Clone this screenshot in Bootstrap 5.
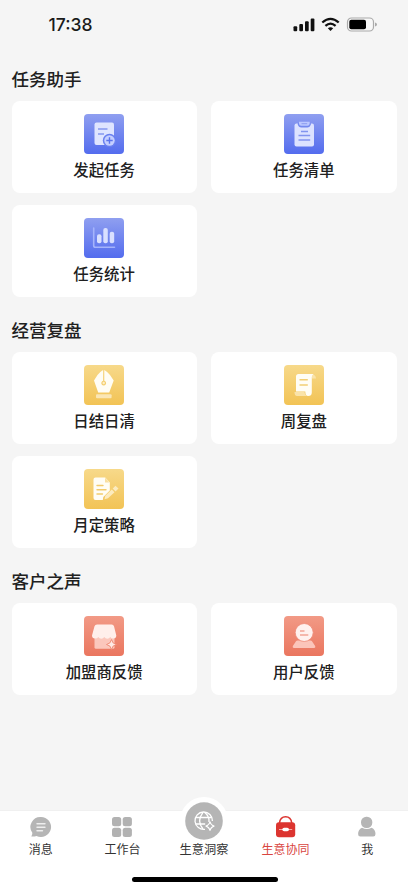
<!DOCTYPE html>
<html lang="zh-CN">
<head>
<meta charset="utf-8">
<meta name="viewport" content="width=device-width, initial-scale=1">
<title>生意协同</title>
<link href="https://cdn.jsdelivr.net/npm/bootstrap@5.3.0/dist/css/bootstrap.min.css" rel="stylesheet">
<style>
body { background: #f5f5f5; color: #202020; font-family: "Noto Sans CJK SC", sans-serif; }
.phone { width: 408px; height: 890px; overflow: hidden; }
.status { height: 50px; padding: 0 31px 0 48.5px; }
.clock { font: 500 17.5px/20px Inter, sans-serif; color: #1a1a1a; }
.content { padding: 16px 11.5px 0; }
.group-title { font-size: 17.5px; font-weight: 500; line-height: 25px; margin: 0 0 10px; }
.group + .group { margin-top: 20px; }
.tiles { display: grid; grid-template-columns: 1fr 1fr; gap: 12px 14.5px; }
.tile { height: 92px; border-radius: 8px; padding-top: 12.5px; }
.tile svg { width: 40px; height: 40px; display: block; }
.tile-name { font-size: 15.4px; font-weight: 500; line-height: 22px; margin-top: 4.5px; }
.tabs { height: 80px; border-top: 1px solid #f0f0f0; color: #333; }
.tab { padding-top: 4px; font-size: 12px; line-height: 18px; }
.tab svg { width: 24px; height: 24px; display: block; margin-bottom: 1px; }
.tab.active { color: #d9453f; }
.tab-main { margin-top: -15px; padding-top: 0; font-size: 12.2px; }
.tab-main svg { width: 50px; height: 50px; margin: 0 0 -6px; }
.home-bar { width: 146px; height: 5px; bottom: 8px; left: 131.5px; background: #000; }
</style>
<script src="https://cdn.jsdelivr.net/npm/bootstrap@5.3.0/dist/js/bootstrap.bundle.min.js"></script>
</head>
<body>
<svg width="0" height="0" class="position-absolute">
  <defs>
    <linearGradient id="blue" x2="0" y2="1"><stop stop-color="#8f9ff0"/><stop offset="1" stop-color="#536cee"/></linearGradient>
    <linearGradient id="gold" x2="0" y2="1"><stop stop-color="#f7d98a"/><stop offset="1" stop-color="#f2c355"/></linearGradient>
    <linearGradient id="coral" x2="0" y2="1"><stop stop-color="#f29a86"/><stop offset="1" stop-color="#ea765f"/></linearGradient>
  </defs>
</svg>
<div class="phone position-relative d-flex flex-column">
  <header class="status d-flex align-items-center justify-content-between">
    <span class="clock">17:38</span>
    <svg width="84" height="18" viewBox="0 0 84 18">
      <g fill="#111"><rect x="0.500" y="10.300" width="3.700" height="5" rx="1"/><rect x="6.300" y="8" width="3.700" height="7.300" rx="1"/><rect x="12" y="5.300" width="3.700" height="10" rx="1"/><rect x="17.700" y="2.500" width="3.700" height="12.800" rx="1"/></g>
      <g fill="none" stroke="#111" stroke-width="2.300"><path d="M29.300 6.500Q37.500-.8 45.700 6.500M32.400 9.800Q37.500 5.400 42.600 9.800"/></g>
      <path d="M34.800 12.200Q37.500 10.200 40.200 12.200L37.500 15Z" fill="#111"/>
      <rect x="54.500" y="2" width="26" height="13" rx="4" fill="#f8f8f8" stroke="#aaa" stroke-width="1.200"/>
      <rect x="56.300" y="3.700" width="16.700" height="9.600" rx="2" fill="#000"/>
      <path d="M82 6.500q2 .5 2 2t-2 2z" fill="#aaa"/>
    </svg>
  </header>

  <main class="content flex-grow-1">
    <section class="group">
      <h2 class="group-title">任务助手</h2>
      <div class="tiles">
        <div class="tile bg-white d-flex flex-column align-items-center">
          <svg viewBox="0 0 40 40"><rect width="40" height="40" rx="4" fill="url(#blue)"/>
            <rect x="10.500" y="8.500" width="19.500" height="22.500" rx="2" fill="#dfe5ff"/>
            <path d="M14 15h9.500M14 20h6" stroke="#8798ef" stroke-width="1.300"/>
            <circle cx="25.500" cy="26.500" r="6.700" fill="#6a80f0"/><circle cx="25.500" cy="26.500" r="5.200" fill="#c5cfff"/>
            <path d="M25.500 23.300v6.400M22.300 26.500h6.400" stroke="#5b73ec" stroke-width="1.400"/></svg>
          <div class="tile-name">发起任务</div>
        </div>
        <div class="tile bg-white d-flex flex-column align-items-center">
          <svg viewBox="0 0 40 40"><rect width="40" height="40" rx="4" fill="url(#blue)"/>
            <rect x="10.500" y="9.500" width="19.500" height="23" rx="2" fill="#dce2ff"/>
            <path d="M13.800 9h13v1.500q-.8 3-3.500 3h-6q-2.700 0-3.500-3z" fill="#7388ef"/>
            <path d="M15 7.800h10.700v1.700q0 2.300-2.200 2.300h-6.300q-2.200 0-2.200-2.300z" fill="#bbc7ff"/><path d="M17.500 9.700h5.700" stroke="#8b9bf0"/>
            <path d="M17 17.500h7M14.500 21.500h11.700M14.500 26h11.700" stroke="#8294ef" stroke-width="1.300"/></svg>
          <div class="tile-name">任务清单</div>
        </div>
        <div class="tile bg-white d-flex flex-column align-items-center">
          <svg viewBox="0 0 40 40"><rect width="40" height="40" rx="4" fill="url(#blue)"/>
            <path d="M9.700 10v17.500q0 1.800 1.800 1.800H30.500" stroke="#a5b4fb" stroke-width="1.600" stroke-linecap="round" fill="none"/>
            <g fill="#d9e0ff"><rect x="13" y="16.300" width="4.500" height="9" rx="2"/><rect x="19.300" y="10" width="4.500" height="15.300" rx="2"/><rect x="25.700" y="13.800" width="4.500" height="11.500" rx="2"/></g></svg>
          <div class="tile-name">任务统计</div>
        </div>
      </div>
    </section>

    <section class="group">
      <h2 class="group-title">经营复盘</h2>
      <div class="tiles">
        <div class="tile bg-white d-flex flex-column align-items-center">
          <svg viewBox="0 0 40 40"><rect width="40" height="40" rx="4" fill="url(#gold)"/>
            <path d="M19.100 5v10.700a2.400 2.400 0 1 0 1.200 0V5q3.500 2 5.700 5l3.700 5.500-4.500 12H14.200L10 15.500l3.500-5.500q2.200-3 5.600-5z" fill="#fffdf5"/>
            <circle cx="19.700" cy="18" r="1.200" fill="#fff0c8"/>
            <rect x="12" y="29.200" width="15.600" height="4" rx="1" fill="#fae6b5"/></svg>
          <div class="tile-name">日结日清</div>
        </div>
        <div class="tile bg-white d-flex flex-column align-items-center">
          <svg viewBox="0 0 40 40"><rect width="40" height="40" rx="4" fill="url(#gold)"/>
            <path d="M27 9q4.500 0 5 4.500h-4z" fill="#fae3a9"/>
            <path d="M14.500 9H29.500q-1.700.8-1.700 3v15.500q0 3.500-3.700 3.500-2.800 0-2.800-4.500H12V11.500Q12 9 14.500 9z" fill="#fffdf5"/>
            <path d="M15.500 14.700h8.300M15.500 20h8.300" stroke="#f2ce74" stroke-width="1.500"/>
            <path d="M10.500 27h10q.3 2.800 2 4H13q-2.500 0-2.500-4z" fill="#fae3a9"/></svg>
          <div class="tile-name">周复盘</div>
        </div>
        <div class="tile bg-white d-flex flex-column align-items-center">
          <svg viewBox="0 0 40 40"><rect width="40" height="40" rx="4" fill="url(#gold)"/>
            <path d="M11.500 8.500h9.700l4.600 5v8l-6.500 6.500-.5 3H11.500q-2 0-2-2V10.500q0-2 2-2z" fill="#fffdf5"/>
            <path d="M21 8.800v4.700h4.500" fill="#f9dfa0"/>
            <path d="M13 16.500h6M13 20.700h9M13 25h5.500" stroke="#f2cb6c" stroke-width="1.400" stroke-linecap="round"/>
            <path d="M31.500 16.800l3 2.800-3 2.800-2.800-2.800zM27.800 20.500l2.700 2.800-6.500 6-3.500 1 .8-3.500z" fill="#fcebbf"/></svg>
          <div class="tile-name">月定策略</div>
        </div>
      </div>
    </section>

    <section class="group">
      <h2 class="group-title">客户之声</h2>
      <div class="tiles">
        <div class="tile bg-white d-flex flex-column align-items-center">
          <svg viewBox="0 0 40 40"><rect width="40" height="40" rx="4" fill="url(#coral)"/>
            <path d="M10.500 21h20v10.300q0 1.500-1.500 1.500H12q-1.500 0-1.500-1.500z" fill="#fbc7bc"/>
            <path d="M13 8.500h14.700q1.700 0 2.300 1.800l2.300 9.200q0 3-3 3-2.200 0-3-1.500-1 1.800-3 1.800t-3-1.800q-1 1.800-3 1.800t-3-1.800q-.8 1.500-3.300 1.500-3 0-3-3l2.500-9.200q.6-1.800 2.500-1.800z" fill="#ffefeb"/>
            <path d="M27.500 23.500q.7 4.300 5 5-4.300.7-5 5-.7-4.300-5-5 4.300-.7 5-5z" fill="#ffe9e4" stroke="#ee8a75" stroke-width=".9"/></svg>
          <div class="tile-name">加盟商反馈</div>
        </div>
        <div class="tile bg-white d-flex flex-column align-items-center">
          <svg viewBox="0 0 40 40"><rect width="40" height="40" rx="4" fill="url(#coral)"/>
            <path d="M13.500 24.500h13q1 0 1.500.8l3 4.500q1 2-1 2.200H10q-2-.2-1-2.200l3-4.500q.5-.8 1.500-.8z" fill="#fbc5ba"/>
            <circle cx="20.200" cy="16.500" r="9" fill="#fff1ee" stroke="#ee8c78" stroke-width=".8"/>
            <path d="M16 15h4.500M16 19h8.300" stroke="#f2a597" stroke-width="1.300"/></svg>
          <div class="tile-name">用户反馈</div>
        </div>
      </div>
    </section>
  </main>

  <nav class="tabs bg-white row row-cols-5 g-0 text-center">
    <div class="tab col d-flex flex-column align-items-center">
      <svg viewBox="0 0 24 24"><path d="M12 2a10 10 0 1 1-4.500 18.900Q5 21.800 2.300 21.500q1.200-1.700 1-3.700A10 10 0 0 1 12 2z" fill="#b5b5b5"/><path d="M8 8.700h8M8 12.200h8M8 15.700h5.500" stroke="#eee" stroke-width="1.400" stroke-linecap="round"/></svg>消息
    </div>
    <div class="tab col d-flex flex-column align-items-center">
      <svg viewBox="0 0 24 24"><g fill="#b2b2b2"><rect x="2" y="2" width="9.200" height="9.200" rx="2.500"/><rect x="12.700" y="2" width="9.200" height="9.200" rx="2.500"/><rect x="2" y="12.700" width="9.200" height="9.200" rx="2.500"/><rect x="12.700" y="12.700" width="9.200" height="9.200" rx="2.500"/></g></svg>工作台
    </div>
    <div class="tab tab-main col d-flex flex-column align-items-center">
      <svg viewBox="0 0 50 50"><circle cx="25" cy="25" r="24" fill="#fff"/><circle cx="25" cy="25" r="18.800" fill="#b5b5b5"/>
        <g fill="none" stroke="#fff" stroke-width="1.300"><path d="M26 33.300A8.700 8.700 0 1 1 33.400 25"/><path d="M24 33Q17.300 25 24 16.300M25.500 16.300Q30.500 20 30 26M16.700 21.500h16M16.700 28h9.500"/></g>
        <path d="M31 25.500q.8 3.800 4.300 4.600-3.500.8-4.300 4.600-.8-3.800-4.300-4.600 3.500-.8 4.300-4.600z" fill="#b5b5b5" stroke="#fff" stroke-width="1.200"/></svg>生意洞察
    </div>
    <div class="tab active col d-flex flex-column align-items-center">
      <svg viewBox="0 0 24 24"><path d="M5.500 8Q6.200 1.800 11.600 1.800T17.700 8" fill="none" stroke="#dc3530" stroke-width="1.500"/><rect x="2" y="7.200" width="19.200" height="15" rx="3" fill="#dc3530"/><path d="M5 14.500h13.200" stroke="#f6aaa6"/><rect x="8.300" y="12.700" width="6.700" height="3.600" rx="1.800" fill="#fff"/></svg>生意协同
    </div>
    <div class="tab col d-flex flex-column align-items-center">
      <svg viewBox="0 0 24 24"><g fill="#b5b5b5"><rect x="6" y="1.700" width="11.300" height="11.300" rx="5.300"/><path d="M7 12.800q4.800 2.500 9.600 0 3.900 1.700 3.900 6.200 0 2.500-2.300 2.500H5.400q-2.300 0-2.300-2.500 0-4.500 3.900-6.200z"/></g></svg>我
    </div>
  </nav>
  <div class="home-bar position-absolute rounded-pill"></div>
</div>
</body>
</html>
